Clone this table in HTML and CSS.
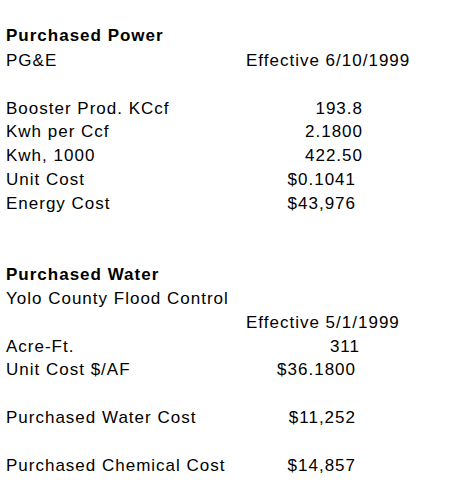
FILE: index.html
```html
<!DOCTYPE html>
<html>
<head>
<meta charset="utf-8">
<link rel="stylesheet" href="styles.css">
</head>
<body>
<div class="sheet">
  <div class="row first"><span class="label bold">Purchased Power</span><span class="val"></span></div>
  <div class="row"><span class="label">PG&amp;E</span><span class="val left">Effective 6/10/1999</span></div>
  <div class="row"></div>
  <div class="row"><span class="label">Booster Prod. KCcf</span><span class="val">193.8</span></div>
  <div class="row"><span class="label">Kwh per Ccf</span><span class="val">2.1800</span></div>
  <div class="row"><span class="label">Kwh, 1000</span><span class="val">422.50</span></div>
  <div class="row"><span class="label">Unit Cost</span><span class="val cur">$0.1041</span></div>
  <div class="row"><span class="label">Energy Cost</span><span class="val cur">$43,976</span></div>
  <div class="row"></div>
  <div class="row"></div>
  <div class="row"><span class="label bold">Purchased Water</span><span class="val"></span></div>
  <div class="row"><span class="label">Yolo County Flood Control</span><span class="val"></span></div>
  <div class="row"><span class="label"></span><span class="val left">Effective 5/1/1999</span></div>
  <div class="row"><span class="label">Acre-Ft.</span><span class="val int">311</span></div>
  <div class="row"><span class="label">Unit Cost $/AF</span><span class="val cur">$36.1800</span></div>
  <div class="row"></div>
  <div class="row"><span class="label">Purchased Water Cost</span><span class="val cur">$11,252</span></div>
  <div class="row"></div>
  <div class="row"><span class="label">Purchased Chemical Cost</span><span class="val cur">$14,857</span></div>
</div>
</body>
</html>
```

FILE: styles.css
```css
html, body {
  margin: 0;
  padding: 0;
  background: #ffffff;
}
.sheet {
  padding: 24px 0 0 6px;
  font-family: "Liberation Sans", Arial, sans-serif;
  font-size: 17px;
  letter-spacing: 1px;
  color: #000000;
}
.row {
  display: grid;
  grid-template-columns: 240px 117px;
  height: 23.8px;
  line-height: 24px;
  white-space: nowrap;
}
.row.first {
  height: 25px;
}
.bold {
  font-weight: bold;
}
.val {
  text-align: right;
}
.val.left {
  text-align: left;
}
.val.int {
  padding-right: 3px;
}
.val.cur {
  padding-right: 7px;
}
```
